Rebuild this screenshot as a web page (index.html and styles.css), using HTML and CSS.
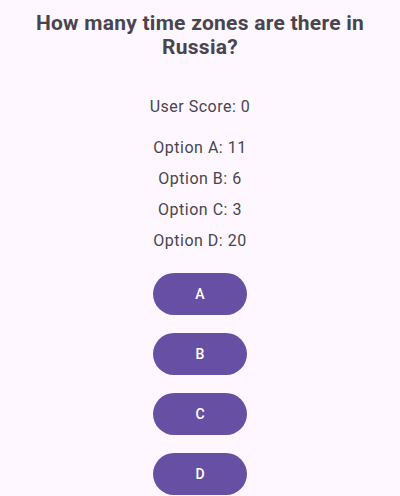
FILE: index.html
```html
<!DOCTYPE html>
<html lang="en">
<head>
<meta charset="utf-8">
<title>Quiz</title>
<link rel="stylesheet" href="styles.css">
</head>
<body>
<main class="quiz">
  <h1 class="question">How many time zones are there in Russia?</h1>
  <p class="score">User Score: 0</p>
  <ul class="options">
    <li>Option A: 11</li>
    <li>Option B: 6</li>
    <li>Option C: 3</li>
    <li>Option D: 20</li>
  </ul>
  <div class="answers">
    <button class="answer">A</button>
    <button class="answer">B</button>
    <button class="answer">C</button>
    <button class="answer">D</button>
  </div>
</main>
</body>
</html>
```

FILE: styles.css
```css
html, body {
  margin: 0;
  padding: 0;
  background: #FEF7FF;
}
body {
  font-family: Roboto, "Noto Sans", sans-serif;
  color: #49454F;
  width: 400px;
  height: 496px;
  overflow: hidden;
}
.quiz {
  display: flex;
  flex-direction: column;
  align-items: center;
  padding: 10.6px 16px 0;
}
.question {
  margin: 0;
  font-size: 21px;
  line-height: 24.5px;
  letter-spacing: 0.25px;
  font-weight: 700;
  text-align: center;
}
.score {
  margin: 35px 0 0;
  font-size: 16px;
  line-height: 24px;
  letter-spacing: 0.5px;
}
.options {
  list-style: none;
  margin: 17px 0 0;
  padding: 0;
  display: flex;
  flex-direction: column;
  align-items: center;
  gap: 7.3px;
  font-size: 16px;
  line-height: 24px;
  letter-spacing: 0.5px;
}
.answers {
  margin-top: 19.5px;
  display: flex;
  flex-direction: column;
  align-items: center;
  gap: 17.6px;
}
.answer {
  width: 94px;
  height: 42.3px;
  border: none;
  border-radius: 21px;
  background: #6750A4;
  color: #FFFFFF;
  font-family: Roboto, "Noto Sans", sans-serif;
  font-size: 14px;
  font-weight: 500;
  letter-spacing: 0.1px;
  padding: 0;
}
```
